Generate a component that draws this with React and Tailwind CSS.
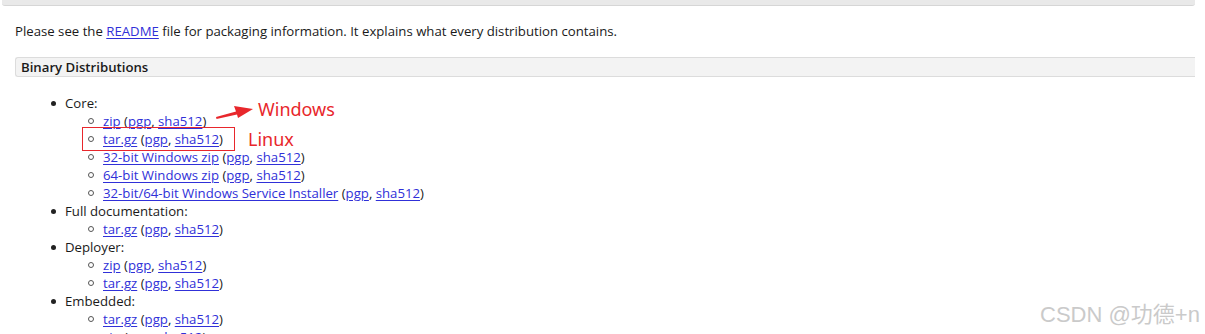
const core = [
  { label: 'zip' },
  { label: 'tar.gz' },
  { label: '32-bit Windows zip' },
  { label: '64-bit Windows zip' },
  { label: '32-bit/64-bit Windows Service Installer' },
]

const groups = [
  { name: 'Core:', items: core },
  { name: 'Full documentation:', items: [{ label: 'tar.gz' }] },
  { name: 'Deployer:', items: [{ label: 'zip' }, { label: 'tar.gz' }] },
  { name: 'Embedded:', items: [{ label: 'tar.gz' }, { label: 'zip' }] },
]

function A({ children }) {
  return <a href="#" className="text-[#3030d8] underline underline-offset-2">{children}</a>
}

function SubItem({ label }) {
  return (
    <div className="flex h-[18px] items-center pl-[88px]">
      <span className="h-[6px] w-[6px] rounded-full border border-[#555]" />
      <span className="ml-[9px] whitespace-nowrap">
        <A>{label}</A> (<A>pgp</A>, <A>sha512</A>)
      </span>
    </div>
  )
}

export default function App() {
  return (
    <div
      className="relative h-[334px] w-[1205px] overflow-hidden bg-white text-[13.2px] leading-[18px] text-[#1a1a1a]"
      style={{ fontFamily: '"Open Sans", "Noto Sans", sans-serif' }}
    >
      <div className="-mt-[14px] ml-[2px] mr-[10px] h-[20px] rounded-b-[3px] border-b border-[#d6d6d6] bg-[#e9e9e9] pl-[12px] font-semibold text-[#bbb]">
        Tomcat
      </div>

      <p className="ml-[15px] mt-[16px]">
        Please see the <A>README</A> file for packaging information. It explains what every distribution contains.
      </p>

      <div className="ml-[15px] mr-[10px] mt-[17px] flex h-[20px] items-center rounded-l-[3px] border-y border-l border-[#dcdcdc] bg-[#f3f3f3] pl-[5px] font-semibold">
        Binary Distributions
      </div>

      <div className="mt-[17px]">
        {groups.map((g) => (
          <div key={g.name}>
            <div className="flex h-[18px] items-center pl-[51px]">
              <span className="h-[5px] w-[5px] rounded-full bg-[#222]" />
              <span className="ml-[9px]">{g.name}</span>
            </div>
            {g.items.map((it, i) => (
              <SubItem key={i} label={it.label} />
            ))}
          </div>
        ))}
      </div>

      {/* annotations */}
      <div className="absolute left-[82px] top-[127px] h-[24px] w-[153px] border-[1.5px] border-[#e8272c]" />
      <svg className="absolute left-[214px] top-[102px]" width="42" height="18" viewBox="0 0 42 18">
        <polygon points="2,15 22,9.5 20,4 39,7 24,16 23,12.5 2.5,17" fill="#e8272c" />
      </svg>
      <div
        className="absolute left-[258px] top-[99px] text-[18px] leading-[20px] text-[#e8272c]"
        style={{ fontFamily: '"Noto Sans", "Open Sans", sans-serif' }}
      >
        Windows
      </div>
      <div
        className="absolute left-[248px] top-[129px] text-[18px] leading-[20px] text-[#e8272c]"
        style={{ fontFamily: '"Noto Sans", "Open Sans", sans-serif' }}
      >
        Linux
      </div>

      <div
        className="absolute left-[1040px] top-[301px] text-[22px] leading-[28px] text-[#cacaca]"
        style={{ fontFamily: '"Liberation Sans", "Noto Sans CJK SC", sans-serif', textShadow: '0 0 1px #fff' }}
      >
        CSDN @功德+n
      </div>
    </div>
  )
}
